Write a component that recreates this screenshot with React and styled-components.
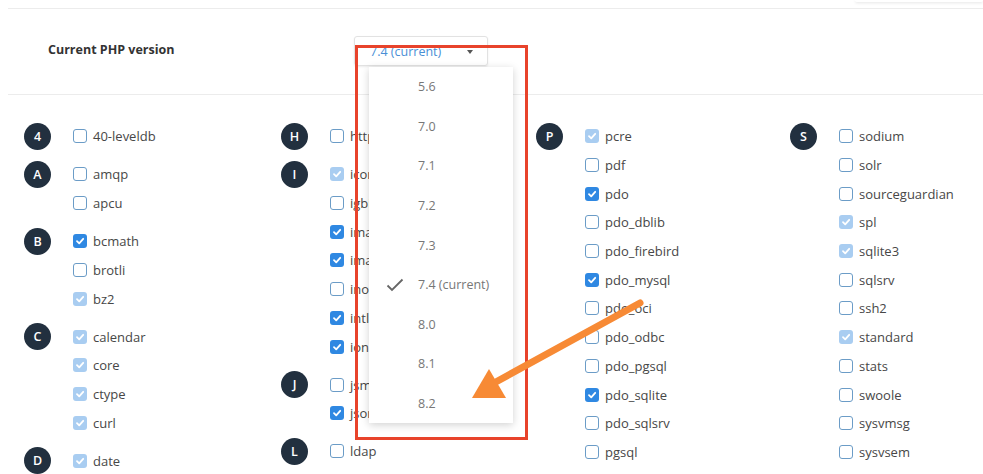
import React from 'react';
import styled, { createGlobalStyle } from 'styled-components';

const GlobalStyle = createGlobalStyle`
  html, body {
    margin: 0;
    padding: 0;
    background: #fff;
    font-family: "Open Sans", "Noto Sans", sans-serif;
    overflow: hidden;
  }
`;

const Page = styled.div`
  position: relative;
  width: 983px;
  height: 474px;
  overflow: hidden;
`;

const TopStrip = styled.div`
  height: 8px;
  display: flex;
  justify-content: flex-end;
  padding-left: 8px;
`;

const TopTab = styled.div`
  width: 128px;
  height: 2px;
  box-shadow: 0 1px 3px rgba(0, 0, 0, 0.12);
  border-radius: 0 0 4px 4px;
`;

const Header = styled.div`
  margin-left: 8px;
  height: 87px;
  border-top: 1px solid #ececec;
  border-bottom: 1px solid #ececec;
  display: flex;
  align-items: flex-start;
  padding-top: 27px;
  box-sizing: border-box;
`;

const HeaderLabel = styled.div`
  width: 306px;
  padding-left: 40px;
  padding-top: 5px;
  font-size: 12.5px;
  font-weight: 700;
  color: #333;
`;

const SelectWrap = styled.div`
  position: relative;
`;

const SelectBox = styled.div`
  width: 134px;
  height: 30px;
  box-sizing: border-box;
  border: 1px solid #e2e2e2;
  border-radius: 3px;
  box-shadow: 0 1px 2px rgba(0, 0, 0, 0.08);
  display: flex;
  align-items: center;
  justify-content: space-between;
  padding: 0 14px 0 15px;
  font-size: 12.5px;
  color: #4a8fd6;
`;

const Caret = styled.span`
  width: 0;
  height: 0;
  border-left: 3px solid transparent;
  border-right: 3px solid transparent;
  border-top: 4px solid #555;
  margin-top: 2px;
`;

const Menu = styled.div`
  position: absolute;
  left: 15px;
  top: 31px;
  width: 144px;
  background: #fff;
  box-shadow: 0 2px 8px rgba(0, 0, 0, 0.18);
  z-index: 5;
`;

const MenuItem = styled.div`
  height: 39.6px;
  display: flex;
  align-items: center;
  font-size: 12.5px;
  color: #777;
`;

const CheckSlot = styled.span`
  width: 49px;
  display: flex;
  justify-content: center;
  padding-left: 2px;
  box-sizing: border-box;
`;

const Grid = styled.div`
  display: grid;
  grid-template-columns: 257px 255px 254px 1fr;
  padding: 27px 0 0 24px;
`;

const Column = styled.div`
  display: flex;
  flex-direction: column;
`;

const Group = styled.div`
  display: flex;
  gap: 22px;
  margin-bottom: 9.4px;
`;

const Letter = styled.div`
  width: 27px;
  height: 27px;
  border-radius: 50%;
  background: #22303f;
  color: #fff;
  font-size: 12.5px;
  font-weight: 600;
  display: flex;
  align-items: center;
  justify-content: center;
  flex-shrink: 0;
  margin-top: 1px;
`;

const Items = styled.div`
  display: flex;
  flex-direction: column;
`;

const Item = styled.div`
  height: 28.7px;
  display: flex;
  align-items: center;
  gap: 6px;
  font-size: 13px;
  color: #474747;
  white-space: nowrap;
`;

const Box = styled.span`
  width: 14px;
  height: 14px;
  box-sizing: border-box;
  border-radius: 3px;
  display: flex;
  align-items: center;
  justify-content: center;
  border: 1px solid ${(p) => (p.state === 0 ? '#6b9cc7' : 'transparent')};
  background: ${(p) => (p.state === 1 ? '#2f88e2' : p.state === 2 ? '#a9cdf1' : '#fff')};
`;

const Highlight = styled.div`
  position: absolute;
  left: 355px;
  top: 45px;
  width: 173px;
  height: 395px;
  box-sizing: border-box;
  border: 3px solid #e8432b;
  z-index: 6;
  pointer-events: none;
`;

const Arrow = styled.svg`
  position: absolute;
  left: 460px;
  top: 290px;
  z-index: 7;
  pointer-events: none;
`;

const groups = [
  [
    { l: '4', items: [['40-leveldb', 0]] },
    { l: 'A', items: [['amqp', 0], ['apcu', 0]] },
    { l: 'B', items: [['bcmath', 1], ['brotli', 0], ['bz2', 2]] },
    { l: 'C', items: [['calendar', 2], ['core', 2], ['ctype', 2], ['curl', 2]] },
    { l: 'D', items: [['date', 2]] },
  ],
  [
    { l: 'H', items: [['http', 0]] },
    {
      l: 'I',
      items: [
        ['iconv', 2], ['igbinary', 0], ['imagick', 1], ['imap', 1],
        ['inotify', 0], ['intl', 1], ['ioncube_loader', 1],
      ],
    },
    { l: 'J', items: [['jsmin', 0], ['json', 1]] },
    { l: 'L', items: [['ldap', 0]] },
  ],
  [
    {
      l: 'P',
      items: [
        ['pcre', 2], ['pdf', 0], ['pdo', 1], ['pdo_dblib', 0], ['pdo_firebird', 0],
        ['pdo_mysql', 1], ['pdo_oci', 0], ['pdo_odbc', 0], ['pdo_pgsql', 0],
        ['pdo_sqlite', 1], ['pdo_sqlsrv', 0], ['pgsql', 0],
      ],
    },
  ],
  [
    {
      l: 'S',
      items: [
        ['sodium', 0], ['solr', 0], ['sourceguardian', 0], ['spl', 2], ['sqlite3', 2],
        ['sqlsrv', 0], ['ssh2', 0], ['standard', 2], ['stats', 0], ['swoole', 0],
        ['sysvmsg', 0], ['sysvsem', 0],
      ],
    },
  ],
];

const versions = ['5.6', '7.0', '7.1', '7.2', '7.3', '7.4 (current)', '8.0', '8.1', '8.2'];

const Tick = ({ color, size = 10, width = 1.8 }) => (
  <svg width={size} height={size} viewBox="0 0 10 10">
    <path d="M2 5.2 L4.2 7.3 L8.2 2.8" fill="none" stroke={color} strokeWidth={width} strokeLinecap="round" strokeLinejoin="round" />
  </svg>
);

const App = () => (
  <Page>
    <GlobalStyle />
    <TopStrip>
      <TopTab />
    </TopStrip>
    <Header>
      <HeaderLabel>Current PHP version</HeaderLabel>
      <SelectWrap>
        <SelectBox>
          <span>7.4 (current)</span>
          <Caret />
        </SelectBox>
        <Menu>
          {versions.map((v) => (
            <MenuItem key={v}>
              <CheckSlot>
                {v === '7.4 (current)' && (
                  <svg width="18" height="14" viewBox="0 0 18 14">
                    <path d="M1.5 7.5 L6 12 L16.5 1.5" fill="none" stroke="#666" strokeWidth="1.8" />
                  </svg>
                )}
              </CheckSlot>
              {v}
            </MenuItem>
          ))}
        </Menu>
      </SelectWrap>
    </Header>
    <Grid>
      {groups.map((col, ci) => (
        <Column key={ci}>
          {col.map((g) => (
            <Group key={g.l}>
              <Letter>{g.l}</Letter>
              <Items>
                {g.items.map(([name, state]) => (
                  <Item key={name}>
                    <Box state={state}>{state !== 0 && <Tick color="#fff" />}</Box>
                    {name}
                  </Item>
                ))}
              </Items>
            </Group>
          ))}
        </Column>
      ))}
    </Grid>
    <Highlight />
    <Arrow width="190" height="120" viewBox="0 0 190 120">
      <line x1="180" y1="13" x2="34" y2="93" stroke="#f78a35" strokeWidth="7" strokeLinecap="round" />
      <polygon points="12,108 29,79 46,108" fill="#f78a35" />
    </Arrow>
  </Page>
);

export default App;
